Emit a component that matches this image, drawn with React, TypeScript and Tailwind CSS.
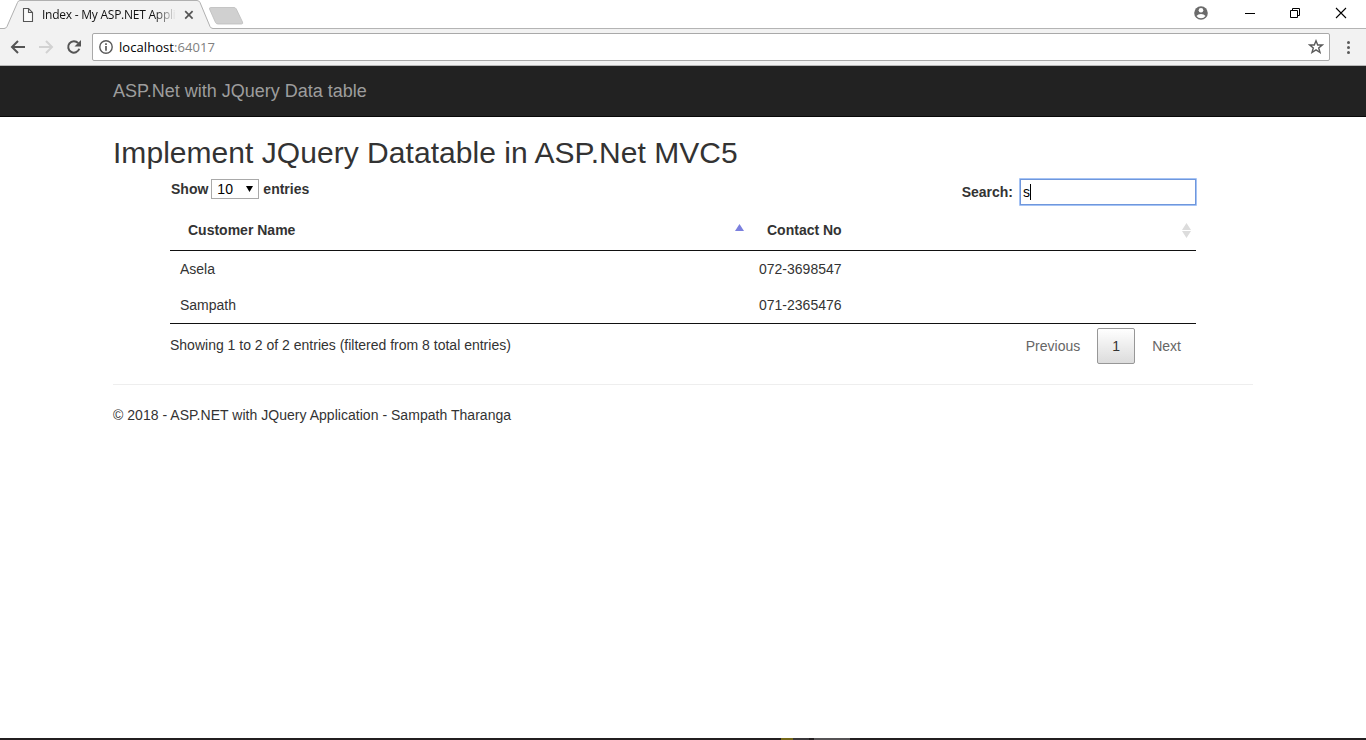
import React from "react";

function TabStrip() {
  return (
    <div className="relative flex h-[29px] items-start border-b border-[#b4b4b4] bg-white">
      <svg className="absolute top-0 left-0" width="250" height="29" viewBox="0 0 250 29">
        <path d="M0 28.5H4Q6 28.5 7 26.5L17.5 2.5Q18.3 .5 20 .5H197Q199 .5 200 2.5L210 26.5Q211 28.5 213 28.5V29H0Z" fill="#f2f2f2" />
        <path d="M0 28.5H4Q6 28.5 7 26.5L17.5 2.5Q18.3 .5 20 .5H197Q199 .5 200 2.5L210 26.5Q211 28.5 213 28.5H250" fill="none" stroke="#b0b0b0" />
        <path d="M211 7.5H234Q235.5 7.5 236.3 9L242.5 22Q243.3 24 241.5 24H218Q216.3 24 215.5 22.5L209.5 9Q209 7.5 211 7.5Z" fill="#d0d0d0" stroke="#bdbdbd" strokeWidth=".8" />
        <path d="M23.5 8.500H28.500L32.500 12.500V21.500H23.500ZM28.500 8.500V12.500H32.500" fill="#fafafa" stroke="#555" strokeWidth="1.1" />
        <path d="M185.2 11.2l7.4 7.4M192.6 11.2l-7.4 7.4" stroke="#555" strokeWidth="1.7" />
      </svg>
      <div className="relative ml-[42px] flex h-[29px] items-center whitespace-nowrap font-['Open_Sans','Noto_Sans',sans-serif] text-[12px] tracking-[-0.24px] text-[#111] [mask-image:linear-gradient(to_right,black_84%,transparent)]">
        Index - My ASP.NET Appli
      </div>
      <svg className="ml-auto" width="196" height="28" viewBox="1170 0 196 28">
        <circle cx="1201" cy="13" r="6.8" fill="#6b6b6b" />
        <circle cx="1201" cy="10.3" r="2.3" fill="#fff" />
        <path d="M1196.5 15.9Q1198 13.9 1201 13.9T1205.5 15.9Q1203.9 18.2 1201 18.2T1196.5 15.9Z" fill="#fff" />
        <path d="M1245 13.5H1255" stroke="#000" />
        <path d="M1290.5 10.5H1297.5V17.5H1290.5ZM1292.5 10.5V8.5H1299.5V15.5H1297.5" fill="none" stroke="#000" />
        <path d="M1336 8l10 10M1346 8l-10 10" stroke="#000" strokeWidth="1.1" />
      </svg>
    </div>
  );
}

function AddressBar() {
  return (
    <div className="flex h-[37px] items-center border-b border-[#b8b8b8] bg-[#f2f2f2]">
      <svg width="92" height="36" viewBox="0 29 92 36" fill="none" strokeWidth="2">
        <path d="M25 47H12M18 41l-6 6 6 6" stroke="#555" />
        <path d="M39 47H52M46 41l6 6-6 6" stroke="#d2d2d2" />
        <path d="M78.2 43.2A5.7 5.7 0 1 0 79.3 48.8" stroke="#555" />
        <path d="M81 40V46.5H74.5Z" fill="#555" />
      </svg>
      <div className="flex h-[28px] w-[1238px] items-center rounded-[2px] border border-[#a9a9a9] bg-white pr-[5px] pl-[6px]">
        <svg width="14" height="14" viewBox="0 0 14 14">
          <circle cx="7" cy="7" r="6.2" fill="none" stroke="#5a5a5a" strokeWidth="1.4" />
          <path d="M7 6V10.8M7 3.2V4.9" stroke="#5a5a5a" strokeWidth="1.7" />
        </svg>
        <span className="ml-[6px] font-['Open_Sans','Noto_Sans',sans-serif] text-[13px] tracking-[0.06px] text-black">
          localhost<span className="text-[#808080]">:64017</span>
        </span>
        <svg className="ml-auto" width="16" height="16" viewBox="0 0 16 16">
          <path d="M8 1.8L9.7 6H14.2L10.7 8.9L12 13.5L8 10.9L4 13.5L5.3 8.9L1.8 6H6.3Z" fill="none" stroke="#5a5a5a" strokeWidth="1.4" />
        </svg>
      </div>
      <svg className="ml-[15px]" width="6" height="16" viewBox="0 0 6 16" fill="#5a5a5a">
        <circle cx="3.500" cy="3.500" r="1.5" />
        <circle cx="3.500" cy="8.500" r="1.5" />
        <circle cx="3.500" cy="13.500" r="1.5" />
      </svg>
    </div>
  );
}

const customers = [
  { name: "Asela", contact: "072-3698547" },
  { name: "Sampath", contact: "071-2365476" },
];

function CustomerTable() {
  return (
    <div className="ml-[57px] w-[1026px]">
      <div className="flex h-[31px] items-start justify-between font-bold">
        <label className="ml-[1px] flex items-center pt-[2px]">
          Show
          <span className="mr-[4px] ml-[3px] flex h-[20px] w-[48px] items-center border border-[#a9a9a9] bg-white pl-[5px] font-normal text-black">
            10
            <svg className="ml-[13px]" width="7" height="6" viewBox="0 0 7 6">
              <path d="M0 0H7L3.5 6Z" />
            </svg>
          </span>
          entries
        </label>
        <label className="-mr-px flex items-center pt-px">
          Search:
          <span className="ml-[6px] flex h-[28px] w-[178px] items-center rounded-[1px] border-2 border-[#a5c3f5] bg-white pl-[2px] font-normal text-black outline-1 -outline-offset-2 outline-[#6f97dc]">
            s<span className="h-[16px] w-px bg-black" />
          </span>
        </label>
      </div>
      <table className="w-full table-fixed border-separate border-spacing-0 text-left">
        <thead>
          <tr className="h-[43px]">
            <th className="w-[579px] border-b border-[#111] pt-[2px] pl-[18px] font-bold">
              <div className="flex items-center justify-between pr-[5px]">
                Customer Name
                <svg className="mb-[6px]" width="9" height="7" viewBox="0 0 9 7">
                  <path d="M4.5 0L9 7H0Z" fill="#7b80de" />
                </svg>
              </div>
            </th>
            <th className="border-b border-[#111] pt-[2px] pl-[18px] font-bold">
              <div className="flex items-center justify-between pr-[5px]">
                Contact No
                <svg width="9" height="15" viewBox="0 0 9 15" fill="#dcdcdc">
                  <path d="M4.5 0L9 7H0ZM0 8H9L4.5 15Z" />
                </svg>
              </div>
            </th>
          </tr>
        </thead>
        <tbody>
          {customers.map((customer) => (
            <tr key={customer.name} className="h-[36px]">
              <td className="pl-[10px]">{customer.name}</td>
              <td className="pl-[10px]">{customer.contact}</td>
            </tr>
          ))}
        </tbody>
      </table>
      <div className="flex h-[61px] items-start justify-between border-t border-[#111]">
        <span className="pt-[11px]">Showing 1 to 2 of 2 entries (filtered from 8 total entries)</span>
        <div className="flex items-center pt-[4px] pr-[15px] text-[#666]">
          <span>Previous</span>
          <span className="mr-[17px] ml-[17px] flex h-[36px] w-[38px] items-center justify-center rounded-[2px] border border-[#979797] bg-linear-to-b from-white to-[#dcdcdc] text-[#333]">
            1
          </span>
          <span>Next</span>
        </div>
      </div>
    </div>
  );
}

export default function App() {
  return (
    <div className="flex h-[740px] w-[1366px] flex-col overflow-hidden bg-white font-['Liberation_Sans',Arial,sans-serif] text-[14px] leading-[20px] text-[#333]">
      <TabStrip />
      <AddressBar />
      <nav className="flex h-[51px] items-center border-b border-[#080808] bg-[#222] pl-[113px] text-[18px] text-[#9d9d9d]">
        ASP.Net with JQuery Data table
      </nav>
      <main className="mx-[113px] flex-1">
        <h2 className="pt-[19px] pb-[8px] text-[30px] leading-[33px] tracking-[0.04px]">Implement JQuery Datatable in ASP.Net MVC5</h2>
        <CustomerTable />
        <hr className="border-t border-[#eee]" />
        <footer className="pt-[20px] tracking-[0.03px]">© 2018 - ASP.NET with JQuery Application - Sampath Tharanga</footer>
      </main>
      <div className="flex h-[2px] bg-[#231f20]">
        <span className="ml-[781px] w-[12px] bg-[#756819]" />
        <span className="w-[16px] bg-[#3b383a]" />
        <span className="ml-[5px] w-[36px] bg-[#565355]" />
      </div>
    </div>
  );
}
